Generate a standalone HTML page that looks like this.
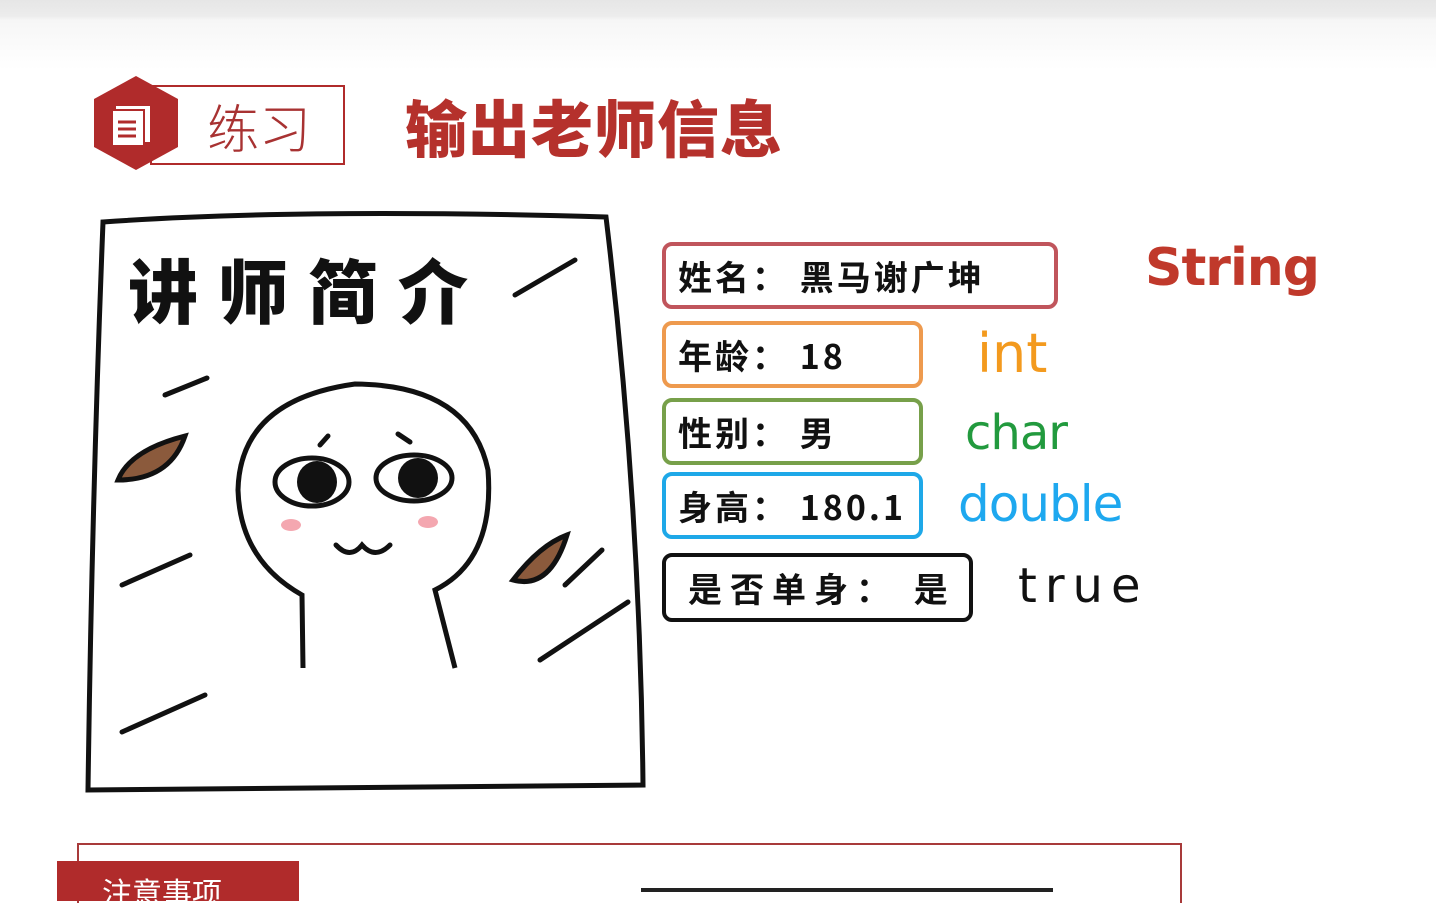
<!DOCTYPE html>
<html><head><meta charset="utf-8"><style>
*{margin:0;padding:0;box-sizing:border-box}
body{width:1436px;height:892px;overflow:hidden;background:#fff;position:relative;font-family:"Liberation Sans","Noto Sans CJK SC",sans-serif}
.top{position:absolute;left:0;top:0;width:1436px;height:70px;background:linear-gradient(#e6e6e6 0,#ececec 16px,#f6f6f6 20px,#fff 70px)}
.abs{position:absolute}
.box{position:absolute;border:4px solid;border-radius:10px;font-weight:bold;font-size:34px;line-height:1;padding-left:12px;display:flex;align-items:center;color:#111;letter-spacing:3px;white-space:nowrap;font-family:"Noto Sans CJK SC",sans-serif}
.tp{position:absolute;font-size:54px;font-family:"DejaVu Sans","Liberation Sans",sans-serif;white-space:nowrap}
</style></head><body>
<div class="top"></div>
<div class="abs" style="left:150px;top:85px;width:195px;height:80px;border:2px solid #b02b2b"></div>
<svg class="abs" style="left:90px;top:74px" width="92" height="98" viewBox="0 0 92 98">
<polygon points="46,2 88,25 88,73 46,96 4,73 4,25" fill="#b02b2b"/>
<rect x="26" y="32" width="34" height="36" fill="#fff"/>
<rect x="22" y="36" width="32" height="36" fill="#fff" stroke="#b02b2b" stroke-width="2"/>
<path d="M28 48h18M28 55h18M28 62h18" stroke="#b02b2b" stroke-width="3"/>
</svg>
<div class="abs" style="left:207px;top:88px;font-size:52px;color:#a83232;font-family:'Noto Sans CJK SC',sans-serif;font-weight:300">练习</div>
<div class="abs" style="left:405px;top:80px;font-size:62px;color:#b5312c;font-weight:900;font-family:'Noto Sans CJK SC',sans-serif;letter-spacing:1px">输出老师信息</div>

<svg class="abs" style="left:80px;top:205px" width="580" height="600" viewBox="80 205 580 600">
<path d="M103 222 Q300 208 606 217 Q640 500 643 785 L88 790 Q92 500 103 222Z" fill="#fff" stroke="#111" stroke-width="5"/>
<path d="M515 295 L575 260 M165 395 L207 378 M122 585 L190 555 M122 732 L205 695 M540 660 L628 602 M565 585 L602 550" stroke="#111" stroke-width="5" stroke-linecap="round"/>
<path d="M118 480 Q130 450 185 436 Q170 480 118 480Z" fill="#8b5a3c" stroke="#111" stroke-width="5"/>
<path d="M513 580 Q540 545 567 535 Q550 590 513 580Z" fill="#8b5a3c" stroke="#111" stroke-width="5"/>
<path d="M303 668 L302 595 Q240 560 238 490 Q240 400 355 384 Q470 385 488 470 Q495 560 435 590 L455 668" fill="#fff" stroke="#111" stroke-width="5"/>
<ellipse cx="312" cy="482" rx="37" ry="24" fill="#fff" stroke="#111" stroke-width="5"/>
<ellipse cx="317" cy="482" rx="20" ry="21" fill="#111"/>
<ellipse cx="414" cy="478" rx="38" ry="23" fill="#fff" stroke="#111" stroke-width="5"/>
<ellipse cx="418" cy="478" rx="20" ry="20" fill="#111"/>
<path d="M320 445 L328 436 M398 434 L410 442" stroke="#111" stroke-width="5" stroke-linecap="round"/>
<path d="M336 545 Q350 560 362 545 Q375 560 390 545" fill="none" stroke="#111" stroke-width="5" stroke-linecap="round"/>
<ellipse cx="291" cy="525" rx="10" ry="6" fill="#f4a7b0"/><ellipse cx="428" cy="522" rx="10" ry="6" fill="#f4a7b0"/>
<text x="128" y="318" font-size="70" font-weight="900" font-family="Noto Sans CJK SC,sans-serif" fill="#111" letter-spacing="20">讲师简介</text>
</svg>

<div class="box" style="left:662px;top:242px;width:396px;height:67px;border-color:#c0555c">姓名：&nbsp;黑马谢广坤</div>
<div class="box" style="left:662px;top:321px;width:261px;height:67px;border-color:#ee9a4e">年龄：&nbsp;18</div>
<div class="box" style="left:662px;top:398px;width:261px;height:67px;border-color:#77a04a">性别：&nbsp;男</div>
<div class="box" style="left:662px;top:472px;width:261px;height:67px;border-color:#1ea8e8">身高：&nbsp;180.1</div>
<div class="box" style="left:662px;top:553px;width:311px;height:69px;border-color:#111;padding-left:22px;letter-spacing:8px">是否单身：&nbsp;是</div>

<div class="tp" style="left:1145px;top:238px;color:#c0392b;font-weight:bold;font-size:52px;letter-spacing:-1px">String</div>
<div class="tp" style="left:977px;top:322px;color:#f39a1e">int</div>
<div class="tp" style="left:965px;top:405px;color:#229a3e;font-size:48px;letter-spacing:-1px">char</div>
<div class="tp" style="left:958px;top:475px;color:#1ea8ef;font-size:50px;letter-spacing:-1px">double</div>
<div class="tp" style="left:1018px;top:558px;color:#111;font-size:48px;letter-spacing:8px">true</div>

<div class="abs" style="left:77px;top:843px;width:1105px;height:60px;border:2px solid #a83a3a;border-bottom:none"></div>
<div class="abs" style="left:57px;top:861px;width:242px;height:40px;background:#b02b2b;color:#fff;font-size:30px;padding-left:45px;padding-top:8px;font-family:'Noto Sans CJK SC',sans-serif">注意事项</div>
<div class="abs" style="left:641px;top:888px;width:412px;height:4px;background:#222"></div>
</body></html>
